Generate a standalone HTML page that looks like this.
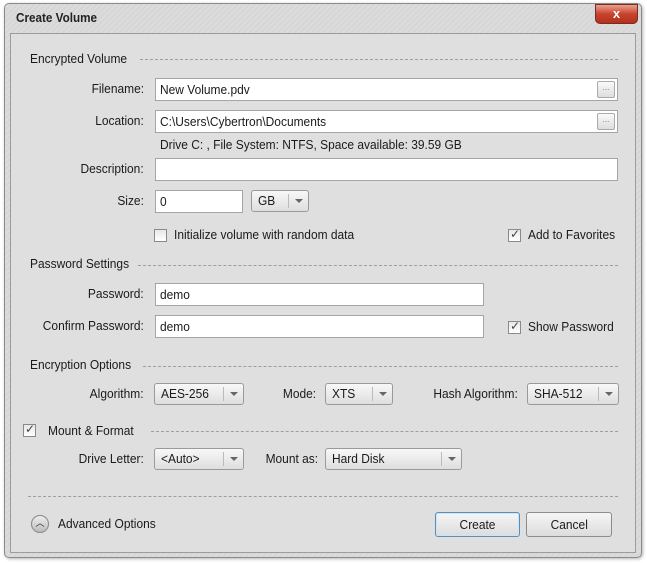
<!DOCTYPE html><html><head><style>
*{box-sizing:border-box;margin:0;padding:0}
body{width:647px;height:564px;background:#fff;font-family:"Liberation Sans",sans-serif;font-size:13px;color:#1a1a1a;position:relative;overflow:hidden}
.a{position:absolute;white-space:nowrap}
.t{display:inline-block;transform:scaleX(.92);transform-origin:0 50%;white-space:nowrap}
.r{transform-origin:100% 50%}
.win{position:absolute;left:4px;top:3px;width:638px;height:555px;border:1px solid #8a8a8a;border-radius:5px;background:repeating-linear-gradient(135deg,#d6d6d6 0 2px,#dcdcdc 2px 4px);box-shadow:1px 1px 3px rgba(0,0,0,.3)}
.panel{position:absolute;left:10px;top:33px;width:626px;height:520px;background:#dfdfdf;border:1px solid #9c9c9c}
.lbl{position:absolute;text-align:right;width:140px;height:16px;line-height:16px;white-space:nowrap}
.inp{position:absolute;background:#fff;border:1px solid #a5a5a5;height:23px;line-height:21px;padding-left:4px;white-space:nowrap}
.br{position:absolute;right:2px;top:2px;width:18px;height:17px;border:1px solid #aaa;border-radius:2px;background:linear-gradient(#fafafa,#ddd);font-size:8px;line-height:12px;text-align:center;color:#666}
.cb{position:absolute;height:22px;line-height:20px;border:1px solid #9a9a9a;border-radius:3px;background:linear-gradient(#f8f8f8,#dedede);padding-left:6px;white-space:nowrap}
.cb i{position:absolute;right:0;top:3px;width:20px;height:14px;border-left:1px solid #bbb}
.cb i:after{content:"";position:absolute;left:6px;top:5px;border:4px solid transparent;border-top:4px solid #666}
.hd{position:absolute;height:16px;line-height:16px;white-space:nowrap}
.dl{position:absolute;border-top:1px dashed #9e9e9e;height:0}
.ck{position:absolute;width:13px;height:13px;border:1px solid #8a8a8a;background:linear-gradient(#e8e8e8,#fff)}
.ck.on:after{content:"✓";position:absolute;left:1px;top:-3px;font-size:12px;color:#444}
.btn{position:absolute;height:25px;line-height:23px;text-align:center;border:1px solid #8c8c8c;border-radius:3px;background:linear-gradient(#f6f6f6,#dcdcdc)}
.btn .t{transform-origin:50% 50%}
</style></head><body>
<div class="win"></div>
<div class="a" style="left:16px;top:10px;font-weight:bold;font-size:13px;color:#222"><span class="t" style="transform:scaleX(.9)">Create Volume</span></div>
<div class="a" style="left:595px;top:4px;width:43px;height:20px;border:1px solid #7a2a20;border-radius:0 0 5px 5px;background:linear-gradient(#e9a08f,#c8432d 50%,#b3301c);color:#fff;font-weight:bold;text-align:center;line-height:17px;font-size:13px">x</div>
<div class="panel"></div>
<div class="hd" style="left:30px;top:51px"><span class="t">Encrypted Volume</span></div><div class="dl" style="left:140px;top:59px;width:478px"></div>
<div class="lbl" style="left:4px;top:81px"><span class="t r">Filename:</span></div>
<div class="inp" style="left:155px;top:78px;width:463px"><span class="t">New Volume.pdv</span><div class="br">...</div></div>
<div class="lbl" style="left:4px;top:113px"><span class="t r">Location:</span></div>
<div class="inp" style="left:155px;top:110px;width:463px"><span class="t">C:\Users\Cybertron\Documents</span><div class="br">...</div></div>
<div class="a" style="left:160px;top:137px"><span class="t">Drive C: , File System: NTFS, Space available: 39.59 GB</span></div>
<div class="lbl" style="left:4px;top:161px"><span class="t r">Description:</span></div>
<div class="inp" style="left:155px;top:158px;width:463px"></div>
<div class="lbl" style="left:4px;top:193px"><span class="t r">Size:</span></div>
<div class="inp" style="left:155px;top:190px;width:88px"><span class="t">0</span></div>
<div class="cb" style="left:251px;top:190px;width:58px"><span class="t">GB</span><i></i></div>
<div class="ck" style="left:154px;top:229px"></div><div class="a" style="left:174px;top:227px"><span class="t">Initialize volume with random data</span></div>
<div class="ck on" style="left:508px;top:229px"></div><div class="a" style="left:528px;top:227px"><span class="t">Add to Favorites</span></div>
<div class="hd" style="left:30px;top:256px"><span class="t">Password Settings</span></div><div class="dl" style="left:138px;top:265px;width:480px"></div>
<div class="lbl" style="left:4px;top:286px"><span class="t r">Password:</span></div>
<div class="inp" style="left:155px;top:283px;width:329px"><span class="t">demo</span></div>
<div class="lbl" style="left:4px;top:318px"><span class="t r">Confirm Password:</span></div>
<div class="inp" style="left:155px;top:315px;width:329px"><span class="t">demo</span></div>
<div class="ck on" style="left:508px;top:321px"></div><div class="a" style="left:528px;top:319px"><span class="t">Show Password</span></div>
<div class="hd" style="left:30px;top:357px"><span class="t">Encryption Options</span></div><div class="dl" style="left:143px;top:366px;width:475px"></div>
<div class="lbl" style="left:4px;top:386px"><span class="t r">Algorithm:</span></div>
<div class="cb" style="left:154px;top:383px;width:90px"><span class="t">AES-256</span><i></i></div>
<div class="lbl" style="left:176px;top:386px"><span class="t r">Mode:</span></div>
<div class="cb" style="left:325px;top:383px;width:68px"><span class="t">XTS</span><i></i></div>
<div class="lbl" style="left:378px;top:386px"><span class="t r">Hash Algorithm:</span></div>
<div class="cb" style="left:527px;top:383px;width:92px"><span class="t">SHA-512</span><i></i></div>
<div class="ck on" style="left:23px;top:424px"></div><div class="hd" style="left:48px;top:423px"><span class="t">Mount &amp; Format</span></div><div class="dl" style="left:151px;top:431px;width:467px"></div>
<div class="lbl" style="left:4px;top:451px"><span class="t r">Drive Letter:</span></div>
<div class="cb" style="left:154px;top:448px;width:90px"><span class="t">&lt;Auto&gt;</span><i></i></div>
<div class="lbl" style="left:178px;top:451px"><span class="t r">Mount as:</span></div>
<div class="cb" style="left:325px;top:448px;width:137px"><span class="t">Hard Disk</span><i></i></div>
<div class="dl" style="left:28px;top:496px;width:590px"></div>
<div class="a" style="left:31px;top:515px;width:18px;height:18px;border-radius:50%;border:1px solid #888;background:linear-gradient(#eee,#bbb);text-align:center;font-size:9px;line-height:15px;color:#333">︿</div>
<div class="a" style="left:58px;top:516px"><span class="t">Advanced Options</span></div>
<div class="btn" style="left:435px;top:512px;width:85px;border-color:#5b8fb9;box-shadow:inset 0 0 0 1px #cde4f5"><span class="t">Create</span></div>
<div class="btn" style="left:526px;top:512px;width:86px"><span class="t">Cancel</span></div>
</body></html>
